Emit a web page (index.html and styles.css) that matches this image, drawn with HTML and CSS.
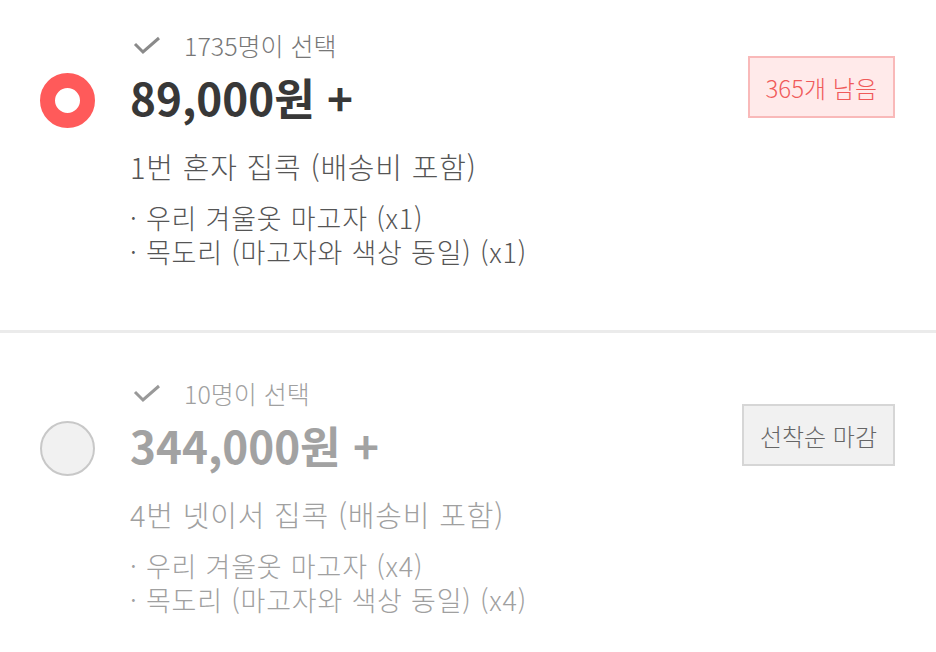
FILE: index.html
```html
<!DOCTYPE html>
<html lang="ko">
<head>
  <meta charset="UTF-8" />
  <meta name="viewport" content="width=device-width, initial-scale=1.0" />
  <title>리워드 선택</title>
  <link rel="stylesheet" href="styles.css">
</head>

<body>
  <section class="reward reward-active">
    <div class="reward-count">
      <svg class="check" viewBox="0 0 30 20" width="30" height="20">
        <path d="M3 9 L11 17 L27 3" fill="none" stroke="currentColor" stroke-width="3" />
      </svg>
      <span>1735명이 선택</span>
    </div>
    <span class="radio radio-on"></span>
    <h2 class="reward-price">89,000원 +</h2>
    <span class="badge badge-left">365개 남음</span>
    <p class="reward-title">1번 혼자 집콕 (배송비 포함)</p>
    <ul class="reward-items">
      <li>· 우리 겨울옷 마고자 (x1)</li>
      <li>· 목도리 (마고자와 색상 동일) (x1)</li>
    </ul>
  </section>

  <section class="reward reward-closed">
    <div class="reward-count">
      <svg class="check" viewBox="0 0 30 20" width="30" height="20">
        <path d="M3 9 L11 17 L27 3" fill="none" stroke="currentColor" stroke-width="3" />
      </svg>
      <span>10명이 선택</span>
    </div>
    <span class="radio"></span>
    <h2 class="reward-price">344,000원 +</h2>
    <span class="badge badge-closed">선착순 마감</span>
    <p class="reward-title">4번 넷이서 집콕 (배송비 포함)</p>
    <ul class="reward-items">
      <li>· 우리 겨울옷 마고자 (x4)</li>
      <li>· 목도리 (마고자와 색상 동일) (x4)</li>
    </ul>
  </section>
</body>
</html>
```

FILE: styles.css
```css
body {
  margin: 0;
  background: #fff;
  font-family: "Noto Sans CJK KR", "Noto Sans", sans-serif;
  color: #333;
}

.reward {
  display: grid;
  grid-template-columns: 55px 1fr auto;
  grid-template-areas:
    ".     count badge"
    "radio price badge"
    ".     title ."
    ".     items .";
  column-gap: 35px;
  padding: 30px 41px 61px 40px;
}

.reward-active {
  border-bottom: 3px solid #ebebeb;
}

.reward-closed {
  padding-top: 45px;
  padding-bottom: 30px;
}

.reward-count {
  grid-area: count;
  display: flex;
  align-items: center;
  gap: 22px;
  height: 30px;
  line-height: 30px;
  font-size: 25px;
  font-weight: 300;
  color: #777;
}

.check {
  color: #8a8a8a;
  margin-left: 2px;
}

.radio {
  grid-area: radio;
  align-self: start;
  margin-top: 13px;
  margin-bottom: -10px;
  width: 55px;
  height: 55px;
  box-sizing: border-box;
  border-radius: 50%;
  border: 2px solid #c8c8c8;
  background: #f1f1f1;
}

.radio-on {
  border: 15px solid #ff5a5a;
  background: #fff;
}

.reward-price {
  grid-area: price;
  margin: 9px 0 0;
  font-size: 44px;
  line-height: 56px;
  font-weight: bold;
  color: #383838;
}

.badge {
  grid-area: badge;
  align-self: start;
  margin-top: 26px;
  height: 62px;
  box-sizing: border-box;
  padding: 0 16px;
  display: flex;
  align-items: center;
  font-size: 24px;
  font-weight: 300;
}

.badge-left {
  background: #ffeaea;
  border: 2px solid #f9b9b9;
  color: #f05a5a;
}

.badge-closed {
  background: #f1f1f1;
  border: 2px solid #d6d6d6;
  color: #666;
}

.reward-title {
  grid-area: title;
  margin: 21px 0 0;
  font-size: 29px;
  line-height: 40px;
  letter-spacing: 0.8px;
  font-weight: 300;
  color: #555;
}

.reward-items {
  grid-area: items;
  list-style: none;
  margin: 15px 0 0;
  padding: 0;
  font-size: 27px;
  line-height: 34px;
  letter-spacing: 0.8px;
  font-weight: 300;
  color: #555;
}

.reward-closed .reward-count,
.reward-closed .reward-title,
.reward-closed .reward-items {
  color: #a0a0a0;
}

.reward-closed .reward-price {
  color: #a2a2a2;
}

.reward-closed .check {
  color: #999;
}
```
